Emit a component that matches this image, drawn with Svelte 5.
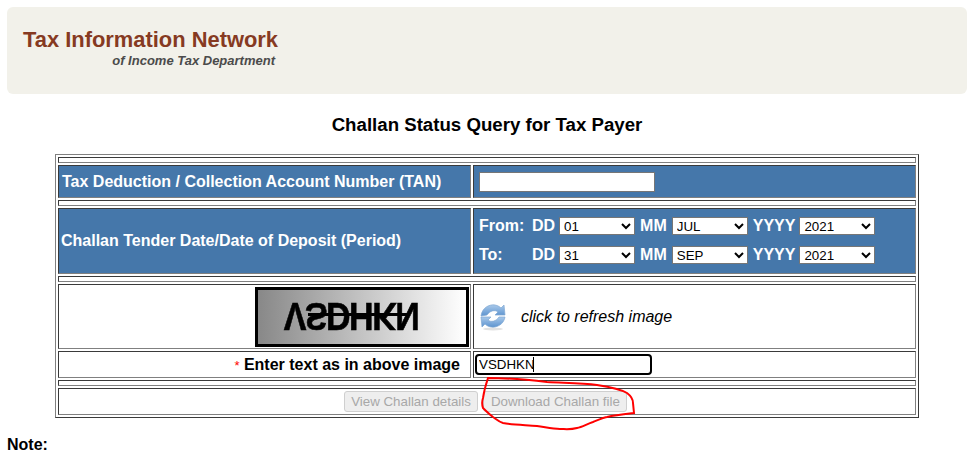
<script>
	let tan = "";
	let captcha = "VSDHKN";

	const days = ["01", "31"];
	const months = ["JUL", "SEP"];
	const years = ["2021"];

	const periods = [
		{ label: "From:", dd: "01", mm: "JUL", yyyy: "2021" },
		{ label: "To:", dd: "31", mm: "SEP", yyyy: "2021" },
	];
</script>

<div class="page">
	<header class="banner">
		<h1>Tax Information Network</h1>
		<p>of Income Tax Department</p>
	</header>

	<h2>Challan Status Query for Tax Payer</h2>

	<form class="form" on:submit|preventDefault>
		<table>
			<colgroup>
				<col class="col-left" />
				<col />
			</colgroup>
			<tbody>
				<tr class="spacer"><td colspan="2"></td></tr>
				<tr class="blue tan-row">
					<td class="label">Tax Deduction / Collection Account Number (TAN)</td>
					<td class="field"><input class="tan-input" type="text" bind:value={tan} /></td>
				</tr>
				<tr class="spacer"><td colspan="2"></td></tr>
				<tr class="blue">
					<td class="label period-label">Challan Tender Date/Date of Deposit (Period)</td>
					<td class="field">
						<div class="periods">
							{#each periods as period}
								<div class="period">
									<span class="period-name">{period.label}</span>
									<span class="unit">DD</span>
									<select value={period.dd}>
										{#each days as d}<option>{d}</option>{/each}
									</select>
									<span class="unit mm">MM</span>
									<select value={period.mm}>
										{#each months as m}<option>{m}</option>{/each}
									</select>
									<span class="unit">YYYY</span>
									<select value={period.yyyy}>
										{#each years as y}<option>{y}</option>{/each}
									</select>
								</div>
							{/each}
						</div>
					</td>
				</tr>
				<tr class="spacer"><td colspan="2"></td></tr>
				<tr class="captcha-row">
					<td class="captcha-cell">
						<div class="captcha"><span>VSDHKN</span><i class="strike"></i></div>
					</td>
					<td>
						<div class="refresh">
							<svg width="26" height="28" viewBox="0 0 26 28">
								<defs>
									<linearGradient id="arrow" x1="0" y1="0" x2="0" y2="1">
										<stop offset="0" stop-color="#a9c9ea" />
										<stop offset="1" stop-color="#5c93cf" />
									</linearGradient>
								</defs>
								<ellipse cx="13" cy="26" rx="10" ry="1.500" fill="#e2e2e2" />
								<path d="M1 13C2 5 9 1 15 2C18 2.500 20 4 21 5L24 2L25 12L15 12L18 9C15 6.500 10 7.500 7 12Z" fill="url(#arrow)" stroke="#7fa8d3" stroke-width="0.7" />
								<path d="M25 14C24 21 17 25 11 24C8 23.500 6 22 5 21L2 24L1 14L11 14L8 17C11 19.500 16 18.500 19 14Z" fill="url(#arrow)" stroke="#7fa8d3" stroke-width="0.7" />
							</svg>
							<em>click to refresh image</em>
						</div>
					</td>
				</tr>
				<tr class="entry-row">
					<td class="entry-label"><span class="star">*</span> Enter text as in above image</td>
					<td>
						<div class="entry">
							<input class="captcha-input" type="text" bind:value={captcha} />
							<i class="caret"></i>
						</div>
					</td>
				</tr>
				<tr class="spacer"><td colspan="2"></td></tr>
				<tr class="button-row">
					<td colspan="2">
						<div class="buttons">
							<button type="button" disabled>View Challan details</button>
							<button type="button" disabled>Download Challan file</button>
						</div>
					</td>
				</tr>
			</tbody>
		</table>
	</form>

	<p class="note">Note:</p>

	<svg class="scribble" width="976" height="462" viewBox="0 0 976 462">
		<path
			d="M488 378C505 378 530 380 547 382C565 383 582 383 597 385C610 387 622 390 627 393C631 396 633 400 633 403L634 413C625 414 615 415 607 417C602 418 598 420 593 422C587 424 582 427 577 428C570 430 565 429 560 429C552 429 545 427 537 426C525 425 512 425 503 423C499 422 496 419 493 417C489 414 486 411 483 408C482 405 482 401 483 398C484 391 486 384 488 378Z"
			fill="none"
			stroke="#f00"
			stroke-width="2"
		/>
	</svg>
</div>

<style>
	:global(body) {
		margin: 0;
		background: #fff;
		font-family: "Liberation Sans", Arial, sans-serif;
	}

	.page {
		position: relative;
		width: 976px;
		height: 462px;
		overflow: hidden;
		padding: 7px 9px 0 7px;
		box-sizing: border-box;
	}

	.banner {
		height: 87px;
		background: #f2f1ea;
		border-radius: 6px;
		padding: 20px 0 0 16px;
		box-sizing: border-box;
	}

	.banner h1 {
		margin: 0;
		white-space: nowrap;
		font-size: 21.900px;
		line-height: 26px;
		color: #863a22;
	}

	.banner p {
		margin: 0;
		width: 252px;
		text-align: right;
		font-size: 13px;
		line-height: 15px;
		font-weight: bold;
		font-style: italic;
		color: #4b4b4b;
	}

	h2 {
		margin: 19px 0 17px;
		font-size: 18.670px;
		line-height: 24px;
		text-align: center;
		color: #000;
	}

	.form {
		margin: 0 0 0 48px;
	}

	table {
		width: 864px;
		table-layout: fixed;
		border-collapse: separate;
		border-spacing: 2px;
		border: 1px solid;
		border-color: #808080 #3a3a3a #3a3a3a #808080;
		box-sizing: border-box;
	}

	.col-left {
		width: 413px;
	}

	td {
		padding: 0;
		border: 1px solid;
		border-color: #3a3a3a #808080 #808080 #3a3a3a;
		vertical-align: middle;
	}

	.spacer td {
		height: 4px;
	}

	.blue td {
		background: #4577aa;
		color: #fff;
		font-weight: bold;
	}

	.tan-row td {
		height: 31px;
	}

	.label {
		font-size: 16px;
		padding-left: 3px;
	}

	.period-label {
		padding-left: 2px;
	}

	.field {
		padding-left: 5px;
	}

	.tan-input {
		display: block;
		width: 176px;
		height: 20px;
		padding: 0 2px;
		border: 1px solid #767676;
		box-sizing: border-box;
		background: #fff;
	}

	.periods {
		display: flex;
		flex-direction: column;
		gap: 11px;
		padding: 8px 0 9px;
	}

	.period {
		display: flex;
		align-items: center;
		font-size: 16px;
	}

	.period-name {
		width: 53px;
	}

	.unit {
		margin-right: 4px;
	}

	.unit.mm {
		margin-right: 5px;
	}

	select {
		width: 76px;
		height: 18px;
		margin-right: 5px;
		padding: 0;
		border: 1px solid #767676;
		border-radius: 0;
		background-color: #fff;
		color: #000;
		font-family: "Liberation Sans", Arial, sans-serif;
		font-size: 13.333px;
	}

	.captcha-row td {
		height: 63px;
	}

	.captcha-cell {
		padding-left: 196px;
	}

	.captcha {
		position: relative;
		width: 214px;
		height: 60px;
		border: 3px solid #000;
		box-sizing: border-box;
		background: linear-gradient(90deg, #888, #fff);
		display: flex;
		align-items: center;
		justify-content: center;
		overflow: hidden;
	}

	.captcha span {
		margin-right: 22px;
		font-size: 34px;
		font-weight: bold;
		color: #000;
		transform: scale(1, -1.150);
		letter-spacing: -1.500px;
		-webkit-text-stroke: 0.5px #000;
		filter: blur(0.4px);
	}

	.strike {
		position: absolute;
		left: 50px;
		right: 58px;
		top: 23px;
		height: 3px;
		background: #000;
	}

	.refresh {
		display: flex;
		align-items: center;
		padding-left: 6px;
	}

	.refresh em {
		margin-left: 15px;
		font-size: 16px;
	}

	.entry-row td {
		height: 25px;
	}

	.entry-label {
		text-align: right;
		padding-right: 10px;
		font-size: 16px;
		font-weight: bold;
	}

	.star {
		color: #f00;
		font-weight: normal;
		font-size: 13px;
	}

	.entry {
		position: relative;
		padding-left: 1px;
	}

	.captcha-input {
		display: block;
		width: 177px;
		height: 21px;
		padding: 0 2px;
		border: 2px solid #000;
		border-radius: 4px;
		box-sizing: border-box;
		outline: none;
		font-family: "Liberation Sans", Arial, sans-serif;
		font-size: 13.333px;
		color: #000;
	}

	.caret {
		position: absolute;
		left: 59px;
		top: 3px;
		width: 1px;
		height: 15px;
		background: #000;
	}

	.button-row td {
		height: 25px;
	}

	.buttons {
		display: flex;
		justify-content: center;
		gap: 5px;
		padding-right: 3px;
	}

	button {
		height: 21px;
		padding: 0 6.500px;
		border: 1px solid #cfcfcf;
		border-radius: 3px;
		background: #eee;
		color: #a8a8a8;
		font-family: "Liberation Sans", Arial, sans-serif;
		font-size: 13.333px;
	}

	.note {
		margin: 18px 0 0;
		font-size: 16px;
		font-weight: bold;
		color: #000;
	}

	.scribble {
		position: absolute;
		left: 0;
		top: 0;
		pointer-events: none;
	}
</style>
